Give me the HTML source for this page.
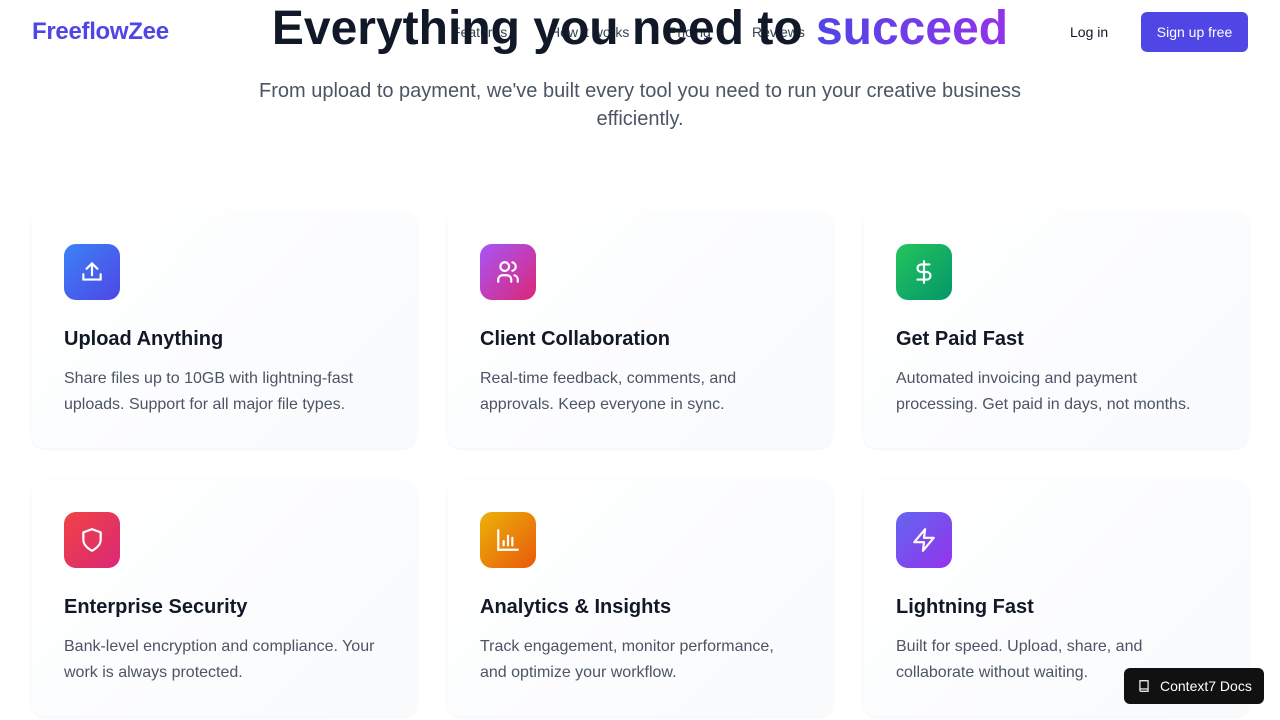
<!DOCTYPE html>
<html><head><meta charset="utf-8"><style>
*{margin:0;padding:0;box-sizing:border-box}
body{width:1280px;height:720px;overflow:hidden;background:#fff;font-family:"Liberation Sans",sans-serif;position:relative}
.logo{position:absolute;left:32px;top:18px;font-size:24px;font-weight:bold;color:#4f46e5;letter-spacing:-0.3px}
h1{position:absolute;left:0;width:1280px;top:1px;text-align:center;font-size:48px;font-weight:bold;color:#111827;line-height:56px;letter-spacing:0px}
h1 span{background:linear-gradient(90deg,#4f46e5,#9333ea);-webkit-background-clip:text;color:transparent}
.nav{position:absolute;top:24px;font-size:14px;color:#374151}
.login{position:absolute;left:1070px;top:24px;font-size:14px;color:#111827}
.btn{position:absolute;left:1141px;top:12px;width:107px;height:40px;background:#4f46e5;color:#fff;border-radius:6px;font-size:14px;text-align:center;line-height:40px}
.sub{position:absolute;left:240px;width:800px;top:77px;text-align:center;font-size:20px;line-height:28px;color:#4b5563}
.card{position:absolute;width:384px;height:236px;border-radius:12px;background:linear-gradient(135deg,#fff,#f8fafc);box-shadow:0 1px 3px rgba(0,0,0,.06);padding:32px}
.ic{width:56px;height:56px;border-radius:12px;display:flex;align-items:center;justify-content:center}
.card h3{margin-top:24px;font-size:20px;color:#111827;line-height:30px}
.card p{margin-top:12px;font-size:16px;line-height:26px;color:#4b5563}
.docs{position:absolute;left:1124px;top:668px;width:140px;height:36px;background:#111;border-radius:6px;color:#fff;font-size:14px;line-height:36px;padding-left:36px}
</style></head><body>
<div class="nav" style="left:452px">Features</div>
<div class="nav" style="left:550px">How it works</div>
<div class="nav" style="left:668px">Pricing</div>
<div class="nav" style="left:752px">Reviews</div>
<h1>Everything you need to <span>succeed</span></h1>
<div class="logo">FreeflowZee</div>
<div class="login">Log in</div>
<div class="btn">Sign up free</div>
<div class="sub">From upload to payment, we've built every tool you need to run your creative business efficiently.</div>

<div class="card" style="left:32px;top:212px"><div class="ic" style="background:linear-gradient(135deg,#3b82f6,#4f46e5)"><svg width="26" height="26" viewBox="0 0 24 24" fill="none" stroke="#fff" stroke-width="2" stroke-linecap="round" stroke-linejoin="round"><path d="M4 14v5h16v-5M12 15V4M7 9l5-5 5 5"/></svg></div><h3>Upload Anything</h3><p>Share files up to 10GB with lightning-fast uploads. Support for all major file types.</p></div>
<div class="card" style="left:448px;top:212px"><div class="ic" style="background:linear-gradient(135deg,#a855f7,#db2777)"><svg width="26" height="26" viewBox="0 0 24 24" fill="none" stroke="#fff" stroke-width="2" stroke-linecap="round"><circle cx="9" cy="7" r="4"/><path d="M3 21v-2a4 4 0 014-4h4a4 4 0 014 4v2M16 3.1a4 4 0 010 7.8M21 21v-2a4 4 0 00-3-3.9"/></svg></div><h3>Client Collaboration</h3><p>Real-time feedback, comments, and approvals. Keep everyone in sync.</p></div>
<div class="card" style="left:864px;top:212px"><div class="ic" style="background:linear-gradient(135deg,#22c55e,#059669)"><svg width="26" height="26" viewBox="0 0 24 24" fill="none" stroke="#fff" stroke-width="2" stroke-linecap="round"><path d="M12 2v20M17 5H9.5a3.5 3.5 0 000 7h5a3.5 3.5 0 010 7H6"/></svg></div><h3>Get Paid Fast</h3><p>Automated invoicing and payment processing. Get paid in days, not months.</p></div>
<div class="card" style="left:32px;top:480px"><div class="ic" style="background:linear-gradient(135deg,#ef4444,#db2777)"><svg width="26" height="26" viewBox="0 0 24 24" fill="none" stroke="#fff" stroke-width="2" stroke-linejoin="round"><path d="M12 22s8-4 8-10V5l-8-3-8 3v7c0 6 8 10 8 10z"/></svg></div><h3>Enterprise Security</h3><p>Bank-level encryption and compliance. Your work is always protected.</p></div>
<div class="card" style="left:448px;top:480px"><div class="ic" style="background:linear-gradient(135deg,#eab308,#ea580c)"><svg width="26" height="26" viewBox="0 0 24 24" fill="none" stroke="#fff" stroke-width="2" stroke-linecap="round"><path d="M3 3v18h18M8 17v-4M12 17V8M16 17v-7"/></svg></div><h3>Analytics &amp; Insights</h3><p>Track engagement, monitor performance, and optimize your workflow.</p></div>
<div class="card" style="left:864px;top:480px"><div class="ic" style="background:linear-gradient(135deg,#6366f1,#9333ea)"><svg width="26" height="26" viewBox="0 0 24 24" fill="none" stroke="#fff" stroke-width="2" stroke-linejoin="round"><path d="M13 2L3 14h9l-1 8 10-12h-9l1-8z"/></svg></div><h3>Lightning Fast</h3><p>Built for speed. Upload, share, and collaborate without waiting.</p></div>
<div class="docs"><svg style="position:absolute;left:13px;top:11px" width="14" height="14" viewBox="0 0 24 24" fill="none" stroke="#fff" stroke-width="2"><path d="M5 3h14v18H7a2 2 0 01-2-2V3zM5 17h14"/></svg>Context7 Docs</div>
</body></html>
